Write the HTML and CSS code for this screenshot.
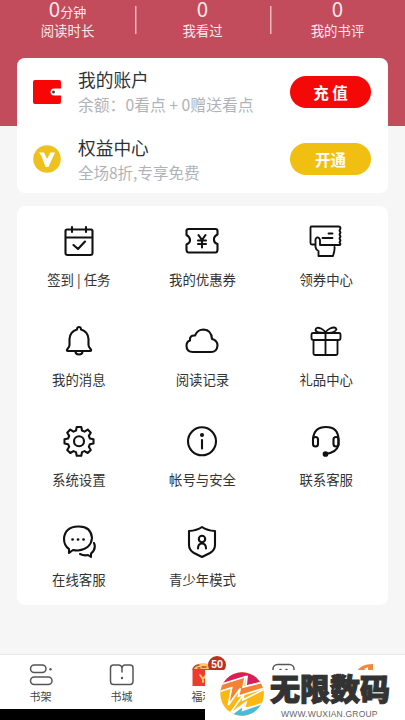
FILE: index.html
```html
<!DOCTYPE html>
<html lang="zh-CN">
<head>
<meta charset="utf-8">
<title>我的</title>
<link rel="stylesheet" href="styles.css">
</head>
<body>
<div class="screen">
  <header class="hero">
    <div class="stat"><div class="num">0<small>分钟</small></div><div class="cap">阅读时长</div></div>
    <div class="stat"><div class="num">0</div><div class="cap">我看过</div></div>
    <div class="stat"><div class="num">0</div><div class="cap">我的书评</div></div>
  </header>
  <main>
    <section class="card account">
      <div class="row">
        <svg class="lead" viewBox="0 0 28 28"><path fill="#f80606" d="M2 2h24q2 0 2 2v20q0 2-2 2H2q-2 0-2-2V4q0-2 2-2z"/><path fill="#fff" d="M28 10.500h-7a3.500 3.500 0 0 0 0 7h7z"/><circle cx="20.500" cy="14" r="1.500" fill="#444"/></svg>
        <div class="info"><h2>我的账户</h2><p class="balance">余额：0看点 + 0赠送看点</p></div>
        <button class="pill red">充 值</button>
      </div>
      <div class="row">
        <svg class="lead" viewBox="0 0 28 28"><circle cx="14" cy="14" r="13.800" fill="#efc11d"/><path d="M6 7.500h5l3 6.500 3.500-6.500H22L15.500 22h-3L8.500 11z" fill="#fff"/></svg>
        <div class="info"><h2>权益中心</h2><p class="offer">全场8折,专享免费</p></div>
        <button class="pill gold">开通</button>
      </div>
    </section>
    <section class="card grid">
      <div class="cell"><svg viewBox="0 0 36 36"><path d="M6 6.500h24q1.500 0 1.500 1.500v22q0 2-2 2h-23q-2 0-2-2V8q0-1.500 1.500-1.500zM4.500 14.500h27M11 4v5M25 4v5M12.500 22l4.500 4 7-7.500"/></svg><span>签到 | 任务</span></div>
      <div class="cell"><svg viewBox="0 0 36 36"><path d="M4.500 6h27q2 0 2 2v3.500q-4 2-3.500 5.500 0 3 3.500 4v5.500q0 3-2 3h-27q-2 0-2-3V21.500q4-2 3.500-4.500 0-3-3.500-5V8q0-2 2-2z"/><path d="M14.500 12l3.500 5 3.500-5M18 17v7.500M14 17.500h8M14 21h8"/></svg><span>我的优惠券</span></div>
      <div class="cell"><svg viewBox="0 0 36 36"><path class="fine" d="M7 21.500H4q-1.500 0-1.500-1.500V4.500q0-1 1-1h27q2 0 2 2l-1 2 1 2-1 2 1 2-1 2 1 2-1 2 1 1.500q0 1-1 1H12V17q-1-3-3-2.500Q7 15.500 7.500 18v6q.500 3 3 4v5H25q2-6.500 1.500-9M20.500 10.500h4M14.500 15h10"/></svg><span>领券中心</span></div>
      <div class="cell"><svg viewBox="0 0 36 36"><path d="M18 4q2 0 2 2.500 7 2 7.500 9.500v6q0 2 2 4 1.500 2-.500 2H7q-2 0-.500-2 2-2 2-4v-6Q9 8.500 16 6.500 16 4 18 4zM14.500 28.500q0 3 3.500 3t3.500-3"/></svg><span>我的消息</span></div>
      <div class="cell"><svg viewBox="0 0 36 36"><path d="M9 29q-6.500 0-6.500-6Q2.500 18.500 6 17.500 5.500 12 11 12.500 13.500 6.500 19.500 6.500q8 .500 8.500 9.500 5.500 1.500 5.500 6.500-.500 6.500-6.500 6.500z"/></svg><span>阅读记录</span></div>
      <div class="cell"><svg viewBox="0 0 36 36"><path class="fine" d="M5 10h26q1.500 0 1.500 1.500V15q0 2-2 2h-25q-2 0-2-2v-3.500Q3.500 10 5 10zM5.500 17v13.500q0 1.500 1.500 1.500h21q1.500 0 1.500-1.500V17M17.500 10V31M17.500 10Q8 10 7.500 7 8 3.500 13 5.500q4 2 4.500 4.500zM17.500 10q9.500 0 11-3.500-1-3.500-6.500-1-4 2-4.500 4.500z"/></svg><span>礼品中心</span></div>
      <div class="cell"><svg viewBox="0 0 36 36"><path d="M15.700 4h4.600l.700 3.500 2.500 1.100 3.200-2 3.100 3.200-2 3.100 1.100 2.600 3.600.700v4.300l-3.600.700-1.100 2.600 2 3.200-3.100 3-3.200-1.900-2.500 1-.700 3.700h-4.600l-.700-3.700-2.500-1-3.200 1.900-3.100-3 2-3.200-1.100-2.600-3.600-.700v-4.300l3.600-.700 1.100-2.600-2-3.100 3.100-3.200 3.200 2 2.500-1.100z"/><circle cx="18" cy="18.300" r="5"/></svg><span>系统设置</span></div>
      <div class="cell"><svg viewBox="0 0 36 36"><circle cx="18" cy="18.300" r="14"/><path d="M18 17v8.500"/><circle cx="18" cy="12" r="1" class="solid"/></svg><span>帐号与安全</span></div>
      <div class="cell"><svg viewBox="0 0 36 36"><rect x="5" y="14" width="5" height="9.500" rx="2.500"/><rect x="25.500" y="14" width="5" height="9.500" rx="2.500"/><path d="M5 16Q6 4 18 4t12.500 12v6Q28.500 30 17 31"/><circle cx="17.500" cy="31" r="1.800" class="solid"/></svg><span>联系客服</span></div>
      <div class="cell"><svg viewBox="0 0 36 36"><path d="M8 30v-4q-5-3-5-10.500Q4 4 17 3.500T31 15Q30 26 17 27.500q-3 0-5-.500zM33 20q2.500 6-3 10.500v3.500L27 32q-4 1-8-1"/><path class="dots" d="M11.500 16.500h.1M17 16.500h.1M22.500 16.500h.1"/></svg><span>在线客服</span></div>
      <div class="cell"><svg viewBox="0 0 36 36"><path d="M18 4q5 3.500 13 4v14q0 5-5 8l-8 4-8-4q-5-3-5-8v-14q8-.500 13-4z"/><circle cx="18" cy="16" r="3.200"/><path d="M14 25.500q0-5 4-5t4 5"/></svg><span>青少年模式</span></div>
    </section>
  </main>
  <nav class="tabs">
    <div class="tab"><svg viewBox="0 0 26 24"><rect x="2.500" y="2" width="15.500" height="7.500" rx="3.750"/><rect x="2.500" y="14" width="21.500" height="7.500" rx="3.750"/><circle cx="22.500" cy="6.200" r="1.200" class="ink"/></svg><span>书架</span></div>
    <div class="tab"><svg viewBox="0 0 26 24"><path d="M13 9V5Q12.500 2 9.500 2h-5q-3 0-3 3v13q0 3.500 3 3.500h16.500q3 0 3-3.500V5q0-3-3-3h-5Q13.500 2 13 5"/><circle cx="13" cy="15" r="1.200" class="ink"/></svg><span>书城</span></div>
    <div class="tab"><svg viewBox="0 0 26 24"><path d="M2.500 6h21v17h-21z" fill="#ed3b30" stroke="none"/><path d="M3 6Q6 0 13 0t10.500 6z" fill="#ffc768" stroke="none"/><path d="M3 6Q5 2 9 2M12 4h4M8 5h2" stroke="#c4442c"/><path d="M10 12l3 4 3-4M13 15v4" stroke="#ffc768" stroke-width="2"/></svg><span>福利</span><b class="badge">50</b></div>
    <div class="tab"><svg viewBox="0 0 26 24"><rect x="2" y="1.500" width="21" height="20" rx="4.500"/><path d="M9 6.500h1M15 6.500h1"/></svg></div>
    <div class="tab"><svg viewBox="0 0 26 24"><path d="M5 9Q8 1 21 1v10H5z" fill="#ed8a42" stroke="none"/><path d="M12 6l4-2v4z" fill="#fff" stroke="none"/></svg></div>
  </nav>
  <div class="system-bar"></div>
  <aside class="brand">
    <svg class="brand-mark" viewBox="120 83 132 132">
      <defs><clipPath id="disc"><circle cx="186" cy="149" r="65"/></clipPath></defs>
      <g clip-path="url(#disc)" stroke="#fff" stroke-width="5">
        <path fill="#fbb714" d="M100 70h180v170H100z"/>
        <path fill="#d91e5b" d="M110 70h160v38l-72 18 3-29-91 29z"/>
        <path fill="#f58232" d="M105 126l91-29-7 31 70-17v18l-84 27 6-24-36 50 10-52-50 16z"/>
        <path fill="#fbb714" d="M147 212l44-62-3 17 80-40v54l-74 10 4-17z"/>
        <path fill="#4abbd5" d="M142 220l48-36-2 14 80-28v60H130z"/>
      </g>
    </svg>
    <div class="brand-copy"><strong>无限数码</strong><em>WWW.WUXIAN.GROUP</em></div>
  </aside>
</div>
</body>
</html>
```
FILE: styles.css
```css
* { box-sizing: border-box; }
body { margin: 0; font-family: "Noto Sans CJK SC", sans-serif; background: #f6f6f6; color: #333; }
h2, p { margin: 0; font-weight: 400; }
.screen { position: relative; display: flex; flex-direction: column; width: 405px; height: 720px; overflow: hidden; }
.hero { display: grid; grid-template-columns: repeat(3, 1fr); flex: none; height: 126px; background: #c24b5c; color: #fbe8eb; text-align: center; }
.stat { height: 40px; }
.stat + .stat { background: linear-gradient(#edb8c0, #edb8c0) 0 6px / 1.5px 28px no-repeat; }
.num { height: 20px; font-size: 20.5px; line-height: 16px; }
.num small { font-size: 13px; }
.cap { font-size: 13.4px; line-height: 20px; }
main { display: flex; flex-direction: column; gap: 13px; flex: none; height: 596px; margin: -68px 17px 0; }
.card { flex: none; background: #fff; border-radius: 8px; }
.account { height: 135px; }
.row { display: flex; align-items: center; height: 67.5px; padding: 0 17px 0 16px; }
.lead { flex: none; width: 28px; height: 28px; }
.info { flex: 1; width: 0; padding: 5px 0 0 17px; white-space: nowrap; }
h2 { font-size: 17.7px; line-height: 24px; margin-top: -3px; color: #2d3236; }
.info p { color: #afb3b8; line-height: 27px; }
.info .balance { font-size: 15.8px; }
.info .offer { font-size: 15.5px; }
.pill { width: 81px; height: 32px; padding: 0; border: 0; border-radius: 16px; color: #fff; font: 700 15.500px/32px "Noto Sans CJK SC", sans-serif; }
.red { background: #f50808; }
.gold { background: #f0bf12; }
.grid { display: grid; grid-template-columns: repeat(3, 1fr); grid-auto-rows: 100px; height: 399px; }
.cell { display: flex; flex-direction: column; align-items: center; padding-top: 17px; font-size: 13.4px; line-height: 20px; white-space: nowrap; }
.cell svg { width: 36px; height: 36px; margin-bottom: 10px; fill: none; stroke: #111; stroke-width: 2.100; stroke-linejoin: round; stroke-linecap: round; }
.cell .fine { stroke-width: 1.850; }
.cell .solid { fill: #111; }
.cell .dots { stroke-width: 2.700; }
.tabs { display: grid; grid-template-columns: repeat(5, 1fr); flex: none; height: 55px; border-top: 1px solid #e8e8e8; background: #fff; }
.tab { position: relative; display: flex; flex-direction: column; align-items: center; padding-top: 8px; font-size: 11px; line-height: 16px; color: #444; }
.tab svg { width: 26px; height: 24px; margin-bottom: 1px; fill: none; stroke: #555; stroke-width: 1.500; stroke-linecap: round; }
.tab .ink { fill: #555; stroke: none; }
.badge { position: absolute; left: 46px; top: 1px; width: 18px; height: 18px; border-radius: 50%; background: #bd3024; color: #fff; font: 700 10.5px/18px Roboto, sans-serif; text-align: center; }
.system-bar { flex: none; height: 11px; background: #000; }
.brand { position: absolute; z-index: 2; right: 0; bottom: 0; display: flex; align-items: flex-start; width: 200px; height: 50px; padding: 2px 0 0 15px; background: #fff; }
.brand-mark { flex: none; width: 44px; height: 44px; }
.brand-copy { display: flex; flex-direction: column; padding-left: 6px; white-space: nowrap; }
.brand strong { margin-top: -2px; font-size: 30px; line-height: 34px; font-weight: 900; color: #333; -webkit-text-stroke: 1.200px #333; }
.brand em { padding: 5px 0 0 11px; font: 400 8.500px/10px "Liberation Sans", sans-serif; color: #666; letter-spacing: .2px; }
```
